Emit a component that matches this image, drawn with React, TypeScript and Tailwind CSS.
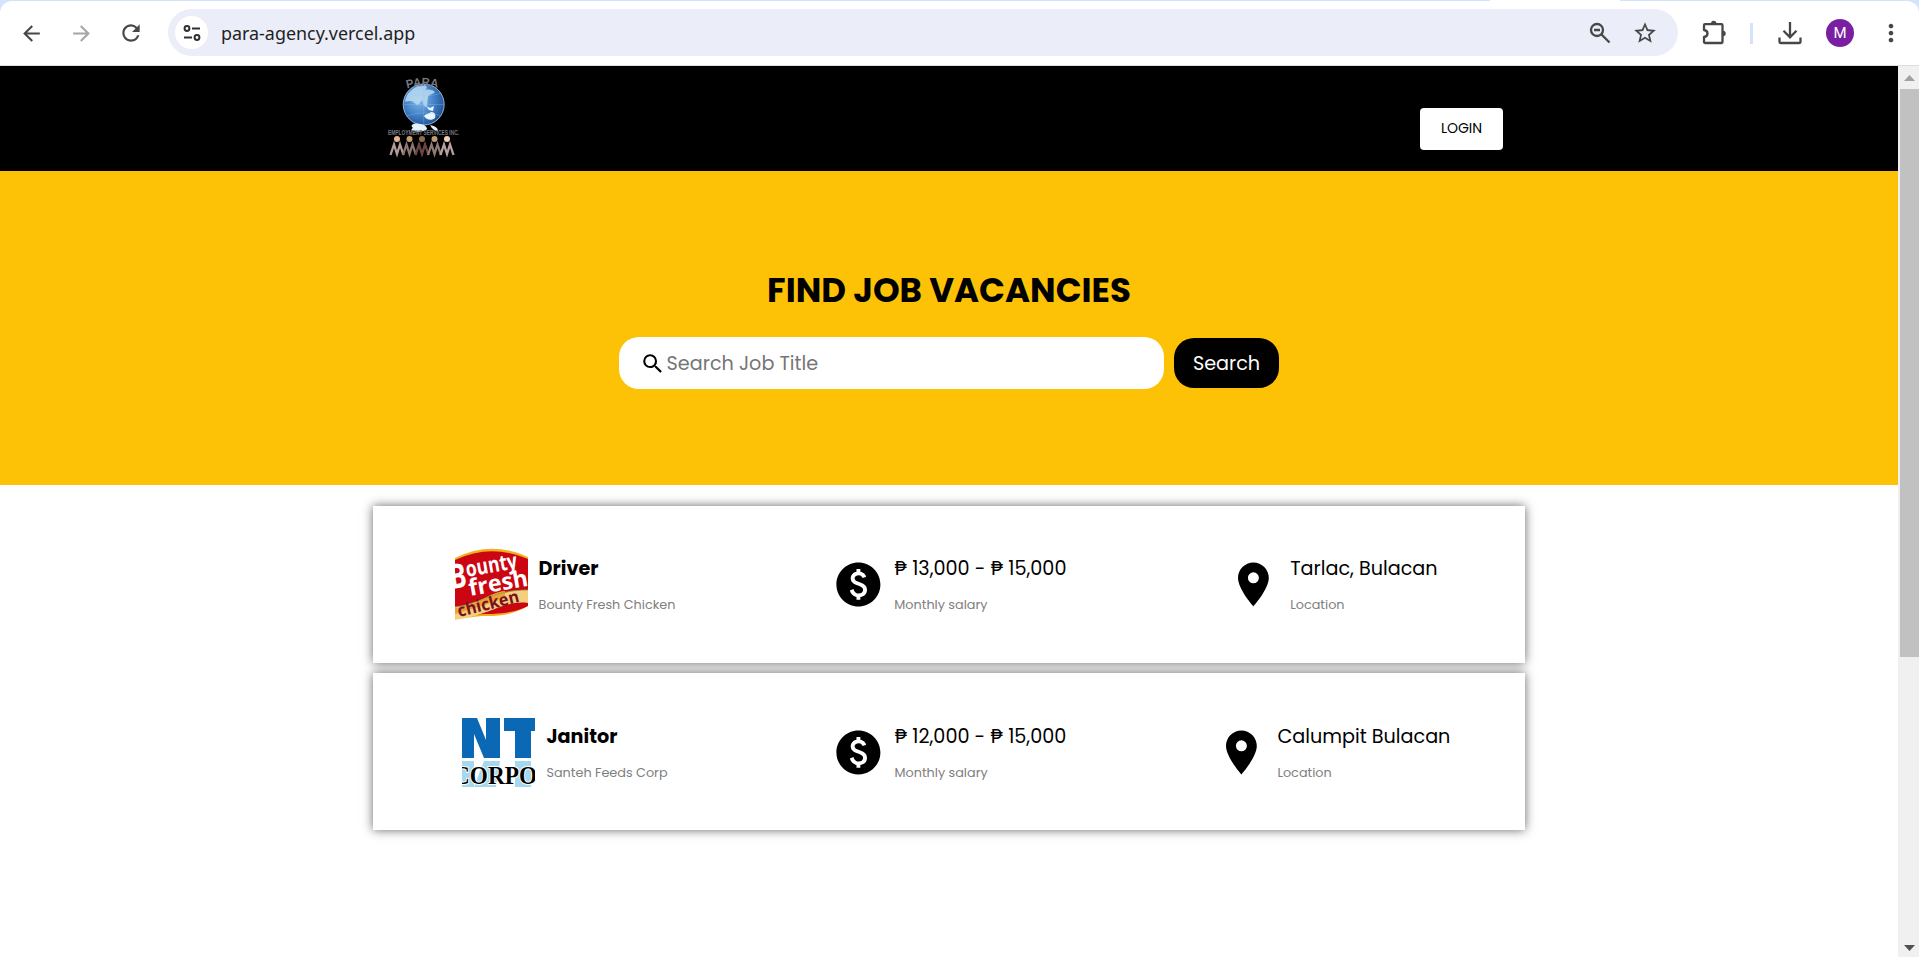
import type { ReactNode } from "react";
import {
  MdArrowBack,
  MdArrowForward,
  MdLocationOn,
  MdMoreVert,
  MdPaid,
  MdRefresh,
  MdSearch,
  MdStarBorder,
} from "react-icons/md";

const people = [
  { x: 27, head: "#e0b596", torso: "#b39c99" },
  { x: 39.5, head: "#c99c72", torso: "#8d7570" },
  { x: 52, head: "#8e6c4b", torso: "#6b4645" },
  { x: 64.5, head: "#c29b72", torso: "#917a76" },
  { x: 77, head: "#f3cfb6", torso: "#b9a0a2" },
];

function AgencyLogo() {
  return (
    <svg className="h-[105px] w-[110px]" viewBox="0 0 110 105" fill="none">
      <defs>
        <radialGradient id="globe" cx="0.4" cy="0.4" r="0.65">
          <stop offset="0" stopColor="#86bbe6" />
          <stop offset="0.55" stopColor="#4483c8" />
          <stop offset="1" stopColor="#1f4f96" />
        </radialGradient>
        <path id="arc" d="M37 22.500 Q53 18 70 22.500" />
      </defs>
      <circle cx="53.700" cy="38.500" r="20.500" fill="url(#globe)" stroke="#b5d3ec" strokeWidth="0.8" />
      <path d="M35 36c1-8 8-16 18-17 4 0 5 3 2 5 4-1 8 0 10 2-3 3-7 2-7 6-1 4 0 7-2 9-3-1-3-5-4-7-2 2-3 5-5 5-3-2-4-6-12-3z" fill="#b9daf1" opacity="0.85" />
      <path d="M56 40l4 2 4-2-1 5-4-1zM54 50c3-3 5-2 7-4 4 0 5 3 4 6-3 3-9 2-11-2z" fill="#e8f6fd" />
      <path d="M53.700 18v41M34 38.500h40M37 27c10 4 24 4 34 0M37 50c10-4 24-4 34 0" stroke="#9cc6e8" strokeWidth="0.5" opacity="0.6" />
      <text fontSize="12" fontFamily="Liberation Sans" fill="#74777f" fontWeight="bold">
        <textPath href="#arc" textLength="31" lengthAdjust="spacingAndGlyphs">PARA</textPath>
      </text>
      <path d="M42 59c3-3 9-1 12 0 3 2 4 4 2 5-4 2-9 2-13 1-2-1-2-2 0-3-1-1-2-2-1-3zM60 59c5 1 8 3 8 6-3 0-6-2-8-6z" fill="#e3f2fc" />
      <text x="18" y="69" fontSize="6.500" fontWeight="bold" fontFamily="Liberation Sans" fill="#77797e" textLength="71" lengthAdjust="spacingAndGlyphs">
        EMPLOYMENT SERVICES INC.
      </text>
      {people.map((p) => (
        <g key={p.x} transform={`translate(${p.x} 0)`}>
          <circle cy="73" r="3" fill={p.head} />
          <path d="M-6.500 89L-3 78.500L0 88L3 78.500L6.500 89" stroke={p.torso} strokeWidth="2.300" />
        </g>
      ))}
    </svg>
  );
}

function BountyLogo() {
  return (
    <svg className="h-[73px] w-[73px] shrink-0" viewBox="0 0 73 73">
      <path d="M0 10Q36-8 73 9V58Q55 69 27 68L0 71z" fill="#f2b01e" />
      <path d="M0 12Q36-5 73 11V58Q58 66 30 66L0 68z" fill="#cb0512" />
      <path d="M0 59C25 56 38 42 73 42V55C50 52 38 66 0 72z" fill="#f3cf7e" />
      <path d="M0 60C25 57 34 44 50 43V50Q28 58 0 66z" fill="#eba234" />
      <path d="M0 59C25 56 38 42 73 42" stroke="#8aa04a" strokeWidth="0.8" fill="none" />
      <g fontFamily="Open Sans, sans-serif" fontWeight="bold" fill="#fff">
        <text transform="translate(-4 41) rotate(-8)" fontSize="34" textLength="17" lengthAdjust="spacingAndGlyphs">B</text>
        <text transform="translate(12 29) rotate(-10)" fontSize="22" textLength="52" lengthAdjust="spacingAndGlyphs">ounty</text>
        <text transform="translate(15 48) rotate(-10)" fontSize="23" textLength="60" lengthAdjust="spacingAndGlyphs">fresh</text>
        <text transform="translate(4 69) rotate(-14)" fontSize="17" fill="#7a1022" textLength="63" lengthAdjust="spacingAndGlyphs">chicken</text>
      </g>
    </svg>
  );
}

function SantehLogo() {
  return (
    <svg className="h-[73px] w-[73px] shrink-0" viewBox="0 1 73 73">
      <path d="M0 3H15L24 25V3H38V43H22L12 19V43H0zM42 3H73V16H69V43H53V16H42z" fill="#0a68b4" />
      <path d="M0 46H12V72H0zM22 46H38L34 72H12zM53 46H69V72H53z" fill="#a4d8ef" />
      <text x="-9" y="69" fontFamily="Liberation Serif, serif" fontSize="26" fontWeight="bold" stroke="#fff" strokeWidth="2" paintOrder="stroke" textLength="84" lengthAdjust="spacingAndGlyphs">
        CORPO
      </text>
    </svg>
  );
}

type Job = { logo: ReactNode; title: string; company: string; pay: string; place: string };

const jobs: Job[] = [
  { logo: <BountyLogo />, title: "Driver", company: "Bounty Fresh Chicken", pay: "₱ 13,000 - ₱ 15,000", place: "Tarlac, Bulacan" },
  { logo: <SantehLogo />, title: "Janitor", company: "Santeh Feeds Corp", pay: "₱ 12,000 - ₱ 15,000", place: "Calumpit Bulacan" },
];

function Detail({ main, sub, bold }: { main: string; sub: string; bold?: boolean }) {
  return (
    <div className="flex flex-col gap-[11px] whitespace-nowrap">
      <span className={`text-[19.2px] leading-[30px] text-black ${bold ? "font-bold" : ""}`}>{main}</span>
      <span className="text-[12.8px] leading-5 text-[#808080]">{sub}</span>
    </div>
  );
}

function JobCard({ job }: { job: Job }) {
  return (
    <article className="grid h-[157px] w-[1152px] grid-cols-3 bg-white shadow-[0_0_10px_rgba(0,0,0,0.6)] even:pt-[2px]">
      <div className="flex items-center justify-center gap-[11px]">
        {job.logo}
        <Detail main={job.title} sub={job.company} bold />
      </div>
      <div className="flex items-center justify-center gap-[10px]">
        <MdPaid className="size-[52.8px] shrink-0" />
        <Detail main={job.pay} sub="Monthly salary" />
      </div>
      <div className="flex items-center justify-center gap-[10px] pr-px">
        <MdLocationOn className="size-[52.8px] shrink-0" />
        <Detail main={job.place} sub="Location" />
      </div>
    </article>
  );
}

function BrowserBar() {
  return (
    <div className="flex h-[66px] shrink-0 flex-col bg-[#d3e3fd]">
      <div className="ml-[1490px] h-px w-[130px] bg-white" />
      <div className="flex h-[65px] items-center rounded-t-xl border-b border-[#dcdcdc] bg-white text-[#474747]">
        <MdArrowBack className="ml-[19px] size-[25px]" />
        <MdArrowForward className="ml-[25px] size-[25px] text-[#a6a6a6]" />
        <MdRefresh className="ml-[24px] size-[26px]" />
        <div className="-mt-px ml-6 flex h-[47px] w-[1510px] items-center rounded-full bg-[#ebeef8] pl-[7px]">
          <span className="flex size-[33px] items-center justify-center rounded-full bg-white">
            <svg className="mt-px size-[18px]" viewBox="0 0 18 18" fill="none" stroke="#303030" strokeWidth="2">
              <circle cx="4" cy="4.500" r="2.400" />
              <path d="M9 4.500h8M1 13.500h8" />
              <circle cx="14" cy="13.500" r="2.400" />
            </svg>
          </span>
          <span className="ml-[13px] mt-px font-['Noto_Sans',sans-serif] text-[17.9px] text-[#1f1f1f]">para-agency.vercel.app</span>
          <svg className="ml-auto mr-[20px] mt-px size-6" viewBox="0 0 24 24" fill="none" stroke="currentColor" strokeWidth="2.300">
            <circle cx="9" cy="9" r="6" />
            <path d="M13.500 13.500L21.500 21.500M6 9h6" />
          </svg>
          <MdStarBorder className="mr-[20px] mt-px size-[26px]" />
        </div>
        <svg className="ml-[22px] size-[28px]" viewBox="0 0 28 28" fill="none" stroke="currentColor" strokeWidth="2.300" strokeLinejoin="round">
          <path d="M5 5.200H21.500a1 1 0 0 1 1 1V23a1 1 0 0 1-1 1H5a1 1 0 0 1-1-1V18c2.400-.3 3.500-1.700 3.500-3.500S6.400 11.300 4 11V6.200a1 1 0 0 1 1-1z" />
          <path d="M11 4.500a2.700 2.700 0 0 1 5.400 0zM23 11.800a2.700 2.700 0 0 1 0 5.400z" fill="currentColor" stroke="none" />
        </svg>
        <span className="ml-[22px] h-[21px] w-[3px] bg-[#d3e3fd]" />
        <svg className="ml-[25px] size-6" viewBox="0 0 24 24" fill="none" stroke="currentColor" strokeWidth="2.300">
          <path d="M12 1V16M5.500 9.800L12 16.300L18.500 9.800" />
          <path d="M1.500 16.500V20.500A1.500 1.500 0 0 0 3 22H21a1.500 1.500 0 0 0 1.500-1.500V16.500" />
        </svg>
        <span className="ml-6 flex size-7 items-center justify-center rounded-full bg-[#7b1fa2] font-['Roboto',sans-serif] text-[15px] text-white">M</span>
        <MdMoreVert className="ml-[23px] size-[28px] shrink-0" />
      </div>
    </div>
  );
}

function Scrollbar() {
  return (
    <div className="flex w-[21px] flex-col items-end bg-[#f0f0f0]">
      <div className="flex h-[23px] w-[19px] items-center justify-center">
        <svg className="h-[6px] w-[11px]" viewBox="0 0 11 6">
          <path d="M0 6L5.500 0L11 6z" fill="#a0a0a0" />
        </svg>
      </div>
      <div className="h-[568px] w-[19px] bg-[#c1c1c1]" />
      <div className="mb-[6px] mt-auto flex w-[19px] justify-center">
        <svg className="h-[6px] w-[11px]" viewBox="0 0 11 6">
          <path d="M0 0L5.500 6L11 0z" fill="#505050" />
        </svg>
      </div>
    </div>
  );
}

export default function App() {
  return (
    <div className="flex h-[957px] flex-col overflow-hidden bg-white">
      <BrowserBar />
      <div className="flex min-h-0 grow">
        <main className="w-[1898px] font-['Poppins','Inter',sans-serif] text-black">
          <header className="flex h-[105px] items-start justify-between bg-black pl-[370px] pr-[395px]">
            <AgencyLogo />
            <button className="mt-[42px] h-[42px] w-[83px] rounded bg-white pb-[2px] text-[14px]">LOGIN</button>
          </header>
          <section className="flex h-[314px] flex-col items-center bg-[#fdc206] pt-[94px]">
            <h1 className="text-[34px] font-bold leading-[51px]">FIND JOB VACANCIES</h1>
            <div className="mt-[21px] flex items-center gap-[10px]">
              <label className="flex h-[52px] w-[545px] items-center rounded-[20px] bg-white pl-[21px] pt-px text-[19.2px] text-[#757575]">
                <MdSearch className="mr-px size-[25.6px] text-black" />
                <span className="pt-px">Search Job Title</span>
              </label>
              <button className="h-[50px] w-[105px] rounded-[20px] bg-black pt-[2px] text-[19.2px] text-white">Search</button>
            </div>
          </section>
          <section className="flex flex-col items-center gap-[10px] pt-[21px]">
            {jobs.map((job) => (
              <JobCard key={job.title} job={job} />
            ))}
          </section>
        </main>
        <Scrollbar />
      </div>
    </div>
  );
}
